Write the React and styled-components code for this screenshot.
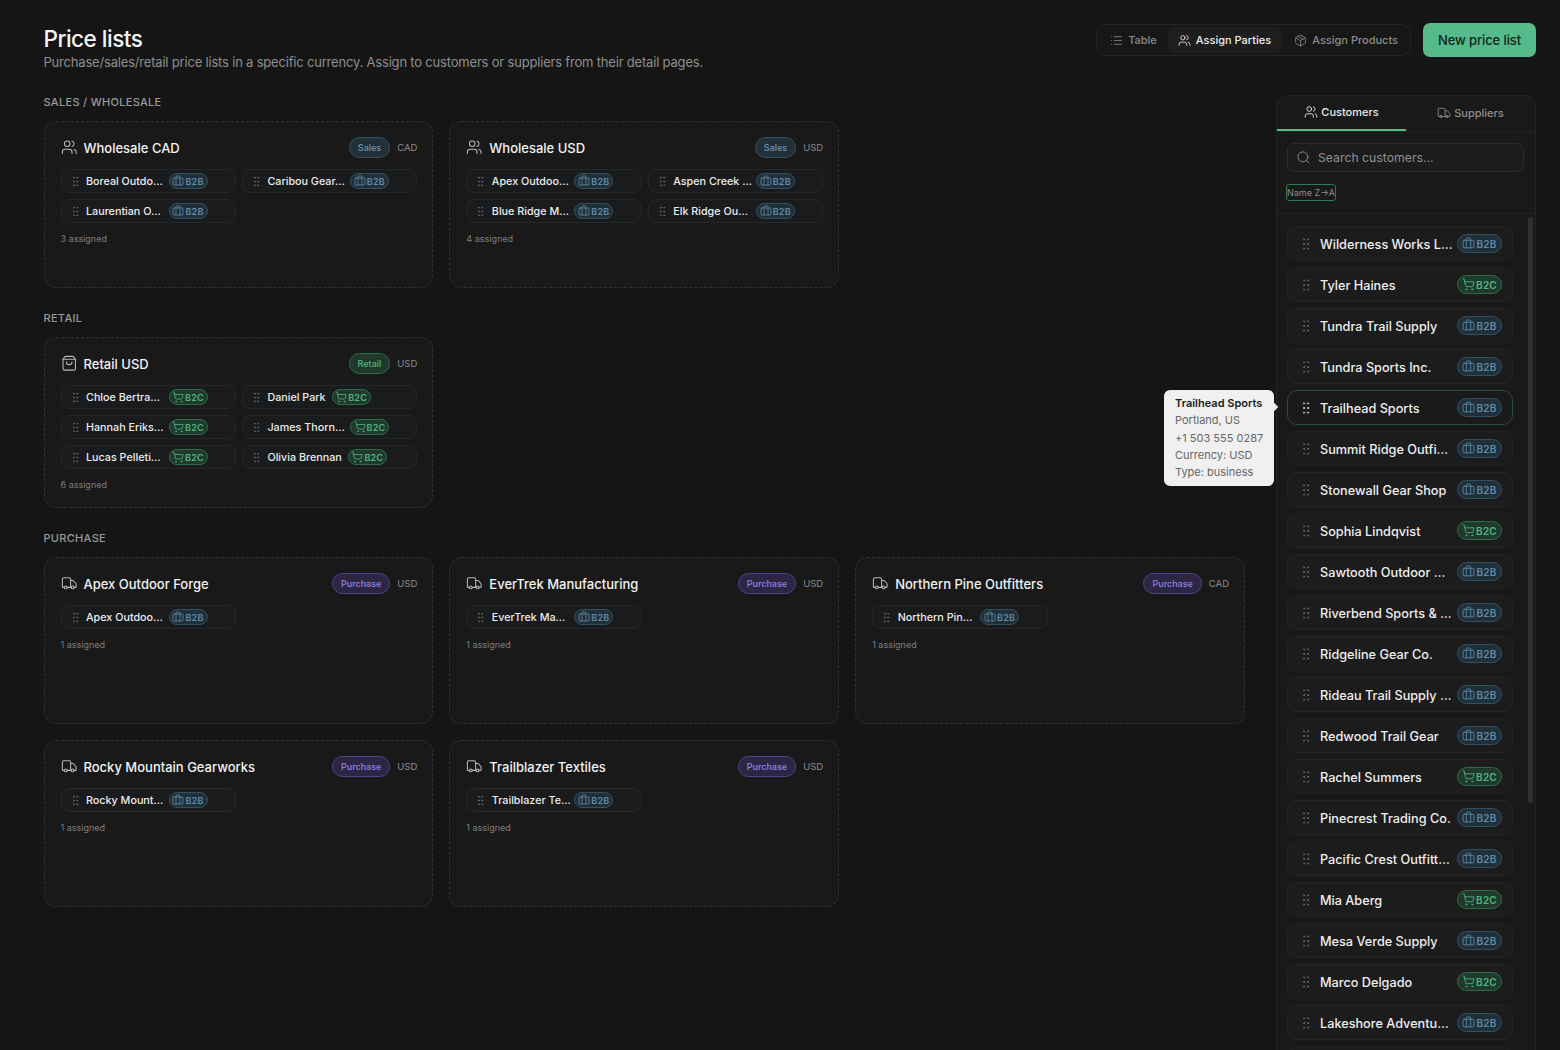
import React from "react";
import styled, { createGlobalStyle } from "styled-components";
import {
  Briefcase,
  GripVertical,
  List,
  Package,
  Search,
  ShoppingBag,
  ShoppingCart,
  Truck,
  Users,
} from "lucide-react";

const GlobalStyle = createGlobalStyle`
  html, body {
    margin: 0;
    height: 100%;
    background: #151515;
    overflow: hidden;
  }
  * { box-sizing: border-box; }
  body {
    font-family: Inter, "Noto Sans", sans-serif;
    color: #f2f2f2;
  }
`;

const Page = styled.div`
  height: 1050px;
  overflow: hidden;
  padding: 23px 24px 0 43.5px;
  display: flex;
  flex-direction: column;
`;

const Header = styled.header`
  display: flex;
  justify-content: space-between;
  align-items: flex-start;
  height: 72px;
`;

const Title = styled.h1`
  margin: 1px 0 0;
  font-size: 22.5px;
  line-height: 30px;
  font-weight: 500;
  letter-spacing: -0.5px;
  color: #f5f5f5;
`;

const Subtitle = styled.p`
  margin: -1px 0 0;
  font-size: 13px;
  line-height: 18px;
  letter-spacing: -0.19px;
  color: #8f8f8f;
`;

const Actions = styled.div`
  display: flex;
  align-items: center;
  gap: 12px;
`;

const Segmented = styled.div`
  display: flex;
  align-items: center;
  height: 32px;
  padding: 0 1px 0 3px;
  border: 1px solid #242424;
  border-radius: 9px;
  background: #171717;
`;

const Segment = styled.button`
  display: flex;
  align-items: center;
  gap: 5px;
  height: 26px;
  padding: 0 ${(p) => p.$right}px 0 ${(p) => p.$left}px;
  border: 0;
  border-radius: 7px;
  font: 500 11px Inter, sans-serif;
  color: ${(p) => (p.$active ? "#ededed" : "#8b8b8b")};
  background: ${(p) => (p.$active ? "#1e1e1e" : "transparent")};
`;

const PrimaryButton = styled.button`
  width: 113px;
  height: 34px;
  border: 0;
  border-radius: 7px;
  background: #55bb8a;
  color: #10241a;
  font: 500 13px Inter, sans-serif;
  letter-spacing: -0.1px;
`;

const Body = styled.div`
  display: flex;
  gap: 31px;
  flex: 1;
  min-height: 0;
`;

const Main = styled.main`
  flex: 1;
  min-width: 0;
`;

const SectionLabel = styled.h2`
  margin: 0 0 12px;
  font-size: 11px;
  line-height: 14px;
  font-weight: 500;
  letter-spacing: 0.3px;
  text-transform: uppercase;
  color: #9a9a9a;
`;

const Section = styled.section`
  margin-bottom: 23px;
`;

const CardGrid = styled.div`
  display: grid;
  grid-template-columns: repeat(3, 1fr);
  gap: 16px;
`;

const Card = styled.article`
  min-height: 167px;
  padding: 15.5px 15px 16px 16px;
  border: 1px dashed #323232;
  border-radius: 12px;
  background: #191919;
`;

const CardHead = styled.div`
  display: flex;
  align-items: center;
  height: 20px;
  margin-bottom: 11.5px;
  color: #b9b9b9;
`;

const CardName = styled.h3`
  flex: 1;
  margin: 0 0 0 6.5px;
  font-size: 13px;
  font-weight: 500;
  color: #f2f2f2;
  white-space: nowrap;
`;

const kindColors = {
  sales: ["#22303a", "#38505f", "#6c94ad"],
  retail: ["#1f3a2c", "#2f6b4b", "#4fb682"],
  purchase: ["#2c2644", "#4f4588", "#9582e0"],
};

const KindPill = styled.span`
  display: inline-flex;
  align-items: center;
  height: 21px;
  padding: 0 8px;
  border-radius: 11px;
  font-size: 9px;
  font-weight: 500;
  background: ${(p) => kindColors[p.$kind][0]};
  border: 1px solid ${(p) => kindColors[p.$kind][1]};
  color: ${(p) => kindColors[p.$kind][2]};
`;

const Currency = styled.span`
  margin-left: 7px;
  font-size: 9.5px;
  color: #8d8d8d;
`;

const ChipGrid = styled.div`
  display: grid;
  grid-template-columns: 1fr 1fr;
  gap: 6px;
`;

const Chip = styled.div`
  display: flex;
  align-items: center;
  height: 24px;
  padding-left: 7px;
  border: 1px solid #252728;
  border-radius: 9px;
  background: #1a1b1c;
  color: #6a6a6a;
`;

const ChipName = styled.span`
  flex: none;
  width: ${(p) => (p.$cut ? "76.5px" : "auto")};
  margin: 0 6px 0 4.5px;
  white-space: nowrap;
  font-size: 10.75px;
  font-weight: 500;
  color: #ececec;
`;

const badgeColors = {
  B2B: ["#20303a", "#33505f", "#5f8ba8"],
  B2C: ["#1f3a2c", "#2f6b4b", "#4fb682"],
};

const Badge = styled.span`
  display: inline-flex;
  align-items: center;
  justify-content: center;
  flex: none;
  gap: 1px;
  width: ${(p) => (p.$large ? 45 : 39)}px;
  height: ${(p) => (p.$large ? 19 : 16)}px;
  border-radius: 10px;
  font-size: ${(p) => (p.$large ? 10 : 9)}px;
  font-weight: 600;
  letter-spacing: 0.2px;
  background: ${(p) => badgeColors[p.$type][0]};
  border: 1px solid ${(p) => badgeColors[p.$type][1]};
  color: ${(p) => badgeColors[p.$type][2]};
`;

const Assigned = styled.p`
  margin: 9px 0 0;
  font-size: 9px;
  line-height: 13px;
  color: #7e7e7e;
`;

const Sidebar = styled.aside`
  position: relative;
  flex: none;
  width: 260px;
  height: 990px;
  border: 1px solid #232323;
  border-bottom: 0;
  border-radius: 12px 12px 0 0;
  background: #191919;
`;

const Tabs = styled.div`
  display: flex;
  height: 36px;
  border-bottom: 1px solid #232323;
`;

const Tab = styled.button`
  flex: 1;
  display: flex;
  align-items: center;
  justify-content: center;
  gap: 3px;
  height: 35px;
  padding: ${(p) => (p.$active ? "0 0 1px" : "1px 0 0")};
  border: 0;
  border-bottom: 2px solid ${(p) => (p.$active ? "#55bb8a" : "transparent")};
  background: transparent;
  font: 500 11px Inter, sans-serif;
  color: ${(p) => (p.$active ? "#ececec" : "#8f8f8f")};
`;

const Filters = styled.div`
  height: 82px;
  padding: 11px 11px 0 10px;
  border-bottom: 1px solid #232323;
`;

const SearchBox = styled.div`
  display: flex;
  align-items: center;
  gap: 7px;
  height: 29px;
  padding: 0 8px;
  border: 1px solid #2b2b2b;
  border-radius: 7px;
  background: #1c1c1c;
  color: #8f8f8f;
  font-size: 12.25px;
`;

const SortChip = styled.button`
  display: block;
  width: 50px;
  height: 17px;
  margin: 12px 0 0 -1px;
  padding: 0;
  border: 1.5px solid #2f7a55;
  border-radius: 3px;
  outline: 0;
  background: transparent;
  font: 9px Inter, sans-serif;
  color: #8f8f8f;
  white-space: nowrap;
`;

const PartyList = styled.ul`
  display: flex;
  flex-direction: column;
  gap: 6px;
  margin: 0;
  padding: 12px 0 0 10px;
  list-style: none;
`;

const PartyRow = styled.li`
  display: flex;
  align-items: center;
  flex: none;
  width: 226px;
  height: 35px;
  padding: 0 10px 0 9.5px;
  border: 1px solid ${(p) => (p.$hover ? "#2d4a3a" : "#242424")};
  border-radius: 10px;
  background: ${(p) => (p.$hover ? "#1a1a1a" : "#1c1c1c")};
  color: ${(p) => (p.$hover ? "#c4c4c4" : "#626262")};
`;

const PartyName = styled.span`
  flex: 1;
  min-width: 0;
  margin-left: 6.5px;
  padding-top: 1px;
  font-size: 12.7px;
  font-weight: 500;
  color: #efefef;
  white-space: nowrap;
`;

const ScrollThumb = styled.div`
  position: absolute;
  top: 121px;
  right: 2px;
  width: 5px;
  height: 586px;
  border-radius: 3px;
  background: #303030;
`;

const Tooltip = styled.div`
  position: absolute;
  top: 294px;
  left: -113px;
  width: 110px;
  height: 96px;
  padding: 5px 0 0 11px;
  border-radius: 6px;
  background: #f0f0f0;
  color: #666;
  font-size: 11px;
  line-height: 17.3px;
  white-space: nowrap;

  &::after {
    content: "";
    position: absolute;
    top: 14px;
    right: -3px;
    width: 6px;
    height: 6px;
    background: #f0f0f0;
    transform: rotate(45deg);
  }

  strong {
    display: block;
    font-weight: 600;
    color: #1b1b1b;
  }
`;

const b2b = "B2B";
const b2c = "B2C";

const groups = [
  {
    label: "Sales / Wholesale",
    lists: [
      {
        name: "Wholesale CAD",
        kind: "sales",
        pill: "Sales",
        currency: "CAD",
        Icon: Users,
        parties: [
          ["Boreal Outdo…", b2b],
          ["Caribou Gear…", b2b],
          ["Laurentian O…", b2b],
        ],
      },
      {
        name: "Wholesale USD",
        kind: "sales",
        pill: "Sales",
        currency: "USD",
        Icon: Users,
        parties: [
          ["Apex Outdoo…", b2b],
          ["Aspen Creek …", b2b],
          ["Blue Ridge M…", b2b],
          ["Elk Ridge Ou…", b2b],
        ],
      },
    ],
  },
  {
    label: "Retail",
    lists: [
      {
        name: "Retail USD",
        kind: "retail",
        pill: "Retail",
        currency: "USD",
        Icon: ShoppingBag,
        parties: [
          ["Chloe Bertra…", b2c],
          ["Daniel Park", b2c],
          ["Hannah Eriks…", b2c],
          ["James Thorn…", b2c],
          ["Lucas Pelleti…", b2c],
          ["Olivia Brennan", b2c],
        ],
      },
    ],
  },
  {
    label: "Purchase",
    lists: [
      ["Apex Outdoor Forge", "USD", "Apex Outdoo…"],
      ["EverTrek Manufacturing", "USD", "EverTrek Ma…"],
      ["Northern Pine Outfitters", "CAD", "Northern Pin…"],
      ["Rocky Mountain Gearworks", "USD", "Rocky Mount…"],
      ["Trailblazer Textiles", "USD", "Trailblazer Te…"],
    ].map(([name, currency, party]) => ({
      name,
      currency,
      kind: "purchase",
      pill: "Purchase",
      Icon: Truck,
      parties: [[party, b2b]],
    })),
  },
];

const customers = [
  ["Wilderness Works L…", b2b],
  ["Tyler Haines", b2c],
  ["Tundra Trail Supply", b2b],
  ["Tundra Sports Inc.", b2b],
  ["Trailhead Sports", b2b],
  ["Summit Ridge Outfi…", b2b],
  ["Stonewall Gear Shop", b2b],
  ["Sophia Lindqvist", b2c],
  ["Sawtooth Outdoor …", b2b],
  ["Riverbend Sports & …", b2b],
  ["Ridgeline Gear Co.", b2b],
  ["Rideau Trail Supply …", b2b],
  ["Redwood Trail Gear", b2b],
  ["Rachel Summers", b2c],
  ["Pinecrest Trading Co.", b2b],
  ["Pacific Crest Outfitt…", b2b],
  ["Mia Aberg", b2c],
  ["Mesa Verde Supply", b2b],
  ["Marco Delgado", b2c],
  ["Lakeshore Adventu…", b2b],
];

const TypeBadge = ({ type, large }) => {
  const Icon = type === b2b ? Briefcase : ShoppingCart;
  return (
    <Badge $type={type} $large={large}>
      <Icon size={large ? 13 : 12} strokeWidth={1.6} />
      {type}
    </Badge>
  );
};

const PriceListCard = ({ list }) => {
  const { Icon } = list;
  return (
    <Card>
      <CardHead>
        <Icon size={16.5} strokeWidth={1.5} />
        <CardName>{list.name}</CardName>
        <KindPill $kind={list.kind}>{list.pill}</KindPill>
        <Currency>{list.currency}</Currency>
      </CardHead>
      <ChipGrid>
        {list.parties.map(([name, type]) => (
          <Chip key={name}>
            <GripVertical size={13} strokeWidth={1.5} />
            <ChipName $cut={name.endsWith("…")}>{name}</ChipName>
            <TypeBadge type={type} />
          </Chip>
        ))}
      </ChipGrid>
      <Assigned>{list.parties.length} assigned</Assigned>
    </Card>
  );
};

export default function App() {
  return (
    <>
      <GlobalStyle />
      <Page>
        <Header>
          <div>
            <Title>Price lists</Title>
            <Subtitle>
              Purchase/sales/retail price lists in a specific currency. Assign to customers or
              suppliers from their detail pages.
            </Subtitle>
          </div>
          <Actions>
            <Segmented>
              <Segment $left={10} $right={11}>
                <List size={13} strokeWidth={1.5} />
                Table
              </Segment>
              <Segment $active $left={10} $right={11}>
                <Users size={13} strokeWidth={1.5} />
                Assign Parties
              </Segment>
              <Segment $left={12} $right={11}>
                <Package size={13} strokeWidth={1.5} />
                Assign Products
              </Segment>
            </Segmented>
            <PrimaryButton>New price list</PrimaryButton>
          </Actions>
        </Header>
        <Body>
          <Main>
            {groups.map((group) => (
              <Section key={group.label}>
                <SectionLabel>{group.label}</SectionLabel>
                <CardGrid>
                  {group.lists.map((list) => (
                    <PriceListCard key={list.name} list={list} />
                  ))}
                </CardGrid>
              </Section>
            ))}
          </Main>
          <Sidebar>
            <Tabs>
              <Tab $active>
                <Users size={14} strokeWidth={1.5} />
                Customers
              </Tab>
              <Tab>
                <Truck size={14} strokeWidth={1.5} />
                Suppliers
              </Tab>
            </Tabs>
            <Filters>
              <SearchBox>
                <Search size={15} strokeWidth={1.5} />
                Search customers…
              </SearchBox>
              <SortChip>Name Z→A</SortChip>
            </Filters>
            <PartyList>
              {customers.map(([name, type]) => (
                <PartyRow key={name} $hover={name === "Trailhead Sports"}>
                  <GripVertical size={16} strokeWidth={1.5} />
                  <PartyName>{name}</PartyName>
                  <TypeBadge type={type} large />
                </PartyRow>
              ))}
              <PartyRow aria-hidden="true" />
            </PartyList>
            <ScrollThumb />
            <Tooltip>
              <strong>Trailhead Sports</strong>
              Portland, US
              <br />
              +1 503 555 0287
              <br />
              Currency: USD
              <br />
              Type: business
            </Tooltip>
          </Sidebar>
        </Body>
      </Page>
    </>
  );
}
